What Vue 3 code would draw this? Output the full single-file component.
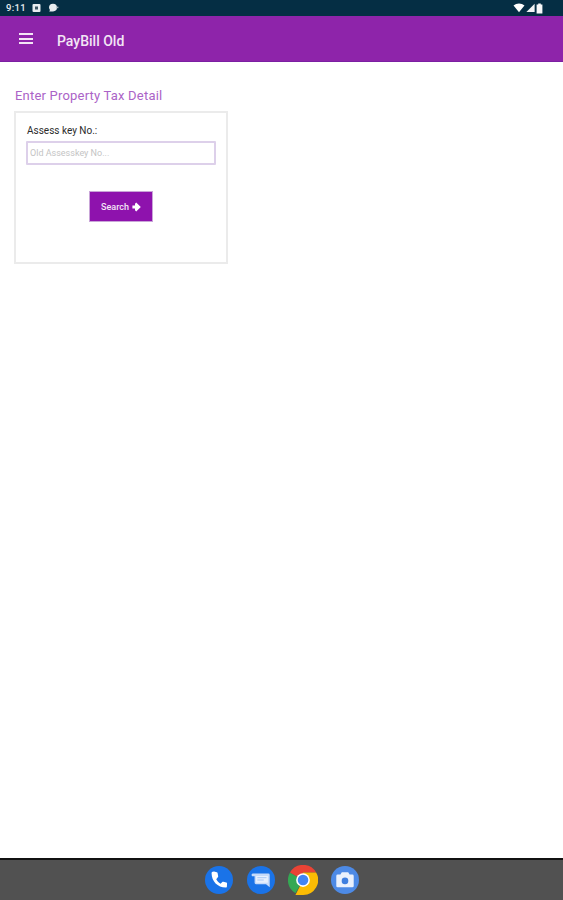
<template>
  <div class="screen">
    <!-- Android status bar -->
    <div class="status-bar">
      <div class="status-left">
        <span class="clock">9:11</span>
        <svg class="status-icon" width="9" height="10" viewBox="0 0 9 10">
          <rect x="0.5" y="1" width="8" height="8" rx="1" fill="#e8edf0" />
          <rect x="3" y="3.500" width="3" height="3" fill="#3c5563" />
        </svg>
        <svg class="status-icon chat" width="12" height="10" viewBox="0 0 12 10">
          <path d="M6 0.8a4 3.8 0 0 1 4 3.8 4 3.8 0 0 1-4 3.8H2.2L3 7A3.8 3.8 0 0 1 2 4.6 4 3.8 0 0 1 6 0.8z" fill="#e8edf0" />
          <rect x="9.4" y="3.6" width="2" height="1.6" fill="#9fb0b8" />
        </svg>
      </div>
      <div class="status-right">
        <svg width="12" height="10" viewBox="0 0 12 10">
          <path d="M0.5 2.6C3.6-0.1 8.4-0.1 11.5 2.6L6 9.2z" fill="#fff" />
        </svg>
        <svg width="9" height="10" viewBox="0 0 9 10">
          <path d="M8.6 0.8V9H0.4z" fill="#f2f4f5" />
        </svg>
        <svg width="7" height="11" viewBox="0 0 7 11">
          <path d="M2.2 0.4h2.6v1H6.4V10.6H0.6V1.4H2.2z" fill="#f7f8f9" />
        </svg>
      </div>
    </div>

    <!-- App toolbar -->
    <header class="toolbar">
      <button class="menu-btn" type="button" aria-label="Menu">
        <span></span><span></span><span></span>
      </button>
      <h1 class="toolbar-title">PayBill Old</h1>
    </header>

    <main class="content">
      <h2 class="section-title">Enter Property Tax Detail</h2>

      <form class="tax-card" @submit.prevent>
        <label class="field-label" for="assess-key">Assess key No.:</label>
        <input id="assess-key" v-model="assessKey" class="field-input" type="text" placeholder="Old Assesskey No..." />
        <div class="actions">
          <button class="search-btn" type="submit">
            Search
            <svg width="9" height="10" viewBox="0 0 9 10">
              <path d="M4.2 0.6L8.8 5 4.2 9.4 3 8.2V6.6H0.4V3.4H3V1.8z" fill="#fff" />
            </svg>
          </button>
        </div>
      </form>
    </main>

    <!-- Launcher dock -->
    <footer class="dock">
      <div class="dock-icon phone">
        <svg width="22" height="22" viewBox="0 0 24 24">
          <path d="M6.6 2.8l3 .7c.5.1.8.5.9 1l.6 3.4c.1.4-.1.8-.4 1.100L9 11.300c1 2 2.600 3.600 4.700 4.700l1.900-1.700c.3-.3.700-.4 1.100-.3l3.300.8c.5.1.8.6.8 1.100l-.2 3.300c0 .7-.5 1.200-1.200 1.100C10.300 19.900 4.100 13.600 3.900 4.600c0-.8.400-1.500 1.100-1.700z" fill="#fff" />
        </svg>
      </div>
      <div class="dock-icon messages">
        <svg width="22" height="22" viewBox="0 0 24 24">
          <path d="M3 5h17a1.500 1.500 0 0 1 1.500 1.500V20l-4-3.500H6.500A1.500 1.500 0 0 1 5 15V8H3.500A1.500 1.500 0 0 1 3 5z" fill="#c6daf9" />
          <rect x="6.500" y="7.500" width="13" height="7.500" rx="0.500" fill="#e8f0fd" />
          <rect x="8" y="9" width="10" height="1" fill="#a3c3f4" />
          <rect x="8" y="11.500" width="7" height="1" fill="#a3c3f4" />
        </svg>
      </div>
      <div class="dock-icon chrome">
        <svg width="30" height="30" viewBox="0 0 48 48">
          <path d="M24 24L11.900 45A24 24 0 0 1 3.200 12z" fill="#34a853" />
          <path d="M24 24L3.200 12A24 24 0 0 1 45 12H24z" fill="#ea4335" />
          <path d="M24 24V12H45A24 24 0 0 1 24 48H11.900z" fill="#fbbc04" />
          <circle cx="24" cy="24" r="11" fill="#fff" />
          <circle cx="24" cy="24" r="8.500" fill="#4285f4" />
        </svg>
      </div>
      <div class="dock-icon camera">
        <svg width="22" height="22" viewBox="0 0 24 24">
          <path d="M8.500 3.500h7l1.500 2.500h3A1.500 1.500 0 0 1 21.500 7.500v11A1.500 1.500 0 0 1 20 20H4a1.500 1.500 0 0 1-1.500-1.500v-11A1.500 1.500 0 0 1 4 6h3z" fill="#eaf1fd" />
          <circle cx="12" cy="13" r="3.600" fill="#3f7fe0" />
        </svg>
      </div>
    </footer>
  </div>
</template>

<script setup>
import { ref } from 'vue';

const assessKey = ref('');
</script>

<style>
html,
body {
  margin: 0;
  padding: 0;
  background: #fff;
}
</style>

<style scoped>
.screen {
  width: 563px;
  height: 900px;
  display: flex;
  flex-direction: column;
  overflow: hidden;
  font-family: "Roboto", "Liberation Sans", sans-serif;
  background: #fff;
}

.status-bar {
  height: 16px;
  flex: none;
  display: flex;
  align-items: center;
  justify-content: space-between;
  padding: 0 20px 0 6px;
  background: #052e44;
  color: #e8edf0;
}

.status-left,
.status-right {
  display: flex;
  align-items: center;
}

.status-left {
  gap: 6px;
}

.status-right {
  gap: 1px;
}

.clock {
  font-size: 9.500px;
  font-weight: 500;
  line-height: 16px;
  letter-spacing: 0.3px;
}

.status-icon {
  display: block;
}

.toolbar {
  height: 46px;
  flex: none;
  display: flex;
  align-items: center;
  box-sizing: border-box;
  padding: 0 0 0 19px;
  background: #8e24aa;
  border-bottom: 1px solid #7b1fa2;
}

.menu-btn {
  width: 14px;
  height: 11px;
  padding: 0;
  border: none;
  background: none;
  display: flex;
  flex-direction: column;
  justify-content: space-between;
}

.menu-btn span {
  display: block;
  height: 2px;
  background: #f3e5f5;
}

.toolbar-title {
  margin: 4px 0 0 24px;
  color: #f3e5f5;
  font-size: 14px;
  font-weight: 500;
}

.content {
  flex: 1;
  padding: 26px 14px 0;
}

.section-title {
  margin: 0 0 8px 1px;
  color: #ab63c7;
  font-size: 13px;
  font-weight: 400;
  line-height: 15px;
  letter-spacing: 0.2px;
}

.tax-card {
  width: 214px;
  height: 153px;
  box-sizing: border-box;
  padding: 12px 10px 0;
  border: 2px solid #ebebeb;
  background: #fff;
}

.field-label {
  display: block;
  color: #2b2b2b;
  font-size: 10px;
  line-height: 12px;
  margin: 0 0 4px 1px;
}

.field-input {
  display: block;
  width: 100%;
  height: 24px;
  box-sizing: border-box;
  padding: 0 2px;
  border: 2px solid #ddd0ea;
  border-radius: 1px;
  outline: none;
  color: #333;
  font-family: inherit;
  font-size: 9px;
}

.field-input::placeholder {
  color: #c4c4c4;
  opacity: 1;
}

.actions {
  display: flex;
  justify-content: center;
  margin-top: 26px;
}

.search-btn {
  width: 64px;
  height: 31px;
  display: flex;
  align-items: center;
  justify-content: center;
  gap: 3px;
  padding: 0;
  border: 1px solid #c9a5d8;
  background: #8e12ad;
  color: #f3e5f5;
  font-family: inherit;
  font-size: 9px;
  font-weight: 500;
}

.dock {
  height: 42px;
  box-sizing: border-box;
  flex: none;
  display: flex;
  align-items: center;
  justify-content: center;
  gap: 14px;
  padding-left: 1px;
  background: #515151;
  border-top: 2px solid #111;
}

.dock-icon {
  width: 28px;
  height: 28px;
  border-radius: 50%;
  display: flex;
  align-items: center;
  justify-content: center;
}

.dock-icon svg {
  flex: none;
}

.phone,
.messages {
  background: #1a73e8;
}

.camera {
  background: #4d8ae6;
}
</style>
